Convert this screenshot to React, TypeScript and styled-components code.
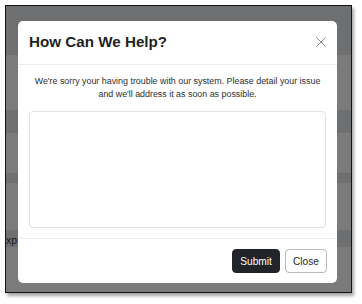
import React from "react";
import styled, { createGlobalStyle } from "styled-components";

const Global = createGlobalStyle`
  html, body { margin: 0; padding: 0; background: #ffffff; }
  body { font-family: "Liberation Sans", Arial, sans-serif; }
  * { box-sizing: border-box; }
`;

const Page = styled.div`
  width: 362px;
  height: 304px;
  padding: 5px;
  background: #ffffff;
`;

const Frame = styled.div`
  position: relative;
  width: 347px;
  height: 288px;
  border: 1px solid #141414;
  box-shadow: 2px 3px 3px rgba(0, 0, 0, 0.35);
  display: flex;
  flex-direction: column;
  overflow: hidden;
`;

const Band = styled.div<{ $h: number; $dark?: boolean }>`
  height: ${(p) => p.$h}px;
  flex: none;
  background: ${(p) => (p.$dark ? "#6e6f71" : "#7b7b7b")};
  display: flex;
  align-items: center;
  font-size: 10.5px;
  line-height: 12px;
  color: #1c1c1c;
`;

const Behind = styled.span`
  margin-top: 2px;
`;

const Modal = styled.div`
  position: absolute;
  left: 12px;
  top: 15px;
  width: 319px;
  height: 262px;
  background: #ffffff;
  border-radius: 5px;
  display: flex;
  flex-direction: column;
`;

const Header = styled.div`
  height: 44px;
  flex: none;
  display: flex;
  align-items: center;
  justify-content: space-between;
  padding: 0 10px 2px 11px;
  border-bottom: 1px solid #ececec;
`;

const Title = styled.h5`
  margin: 0;
  font-size: 15.2px;
  font-weight: 700;
  color: #1f1f1f;
`;

const CloseX = styled.button`
  border: 0;
  background: transparent;
  padding: 0;
  width: 12px;
  height: 12px;
  display: flex;
  align-items: center;
  justify-content: center;
  cursor: pointer;
`;

const Body = styled.div`
  flex: 1;
  display: flex;
  flex-direction: column;
  padding: 10px 11px 10px 11px;
  border-bottom: 1px solid #ececec;
`;

const Message = styled.p`
  margin: 0 0 10px 0;
  font-size: 8.9px;
  line-height: 13px;
  text-align: center;
  color: #2e2e2e;
  white-space: nowrap;
`;

const Area = styled.textarea`
  flex: 1;
  width: 100%;
  resize: none;
  border: 1px solid #dfe2e6;
  border-radius: 4px;
  font-family: inherit;
  outline: none;
`;

const Footer = styled.div`
  height: 44px;
  flex: none;
  display: flex;
  align-items: center;
  justify-content: flex-end;
  gap: 5px;
  padding: 0 10px 0 11px;
`;

const Btn = styled.button<{ $primary?: boolean }>`
  height: 24px;
  padding: 0 7px;
  font-family: "Liberation Sans", Arial, sans-serif;
  font-size: 10.2px;
  border-radius: 4px;
  cursor: pointer;
  border: 1px solid ${(p) => (p.$primary ? "#212529" : "#b9b9b9")};
  background: ${(p) => (p.$primary ? "#212529" : "#ffffff")};
  color: ${(p) => (p.$primary ? "#ffffff" : "#2a2a2a")};
`;

export default function App() {
  return (
    <>
      <Global />
      <Page>
        <Frame>
          <Band $h={49} $dark />
          <Band $h={55} />
          <Band $h={23} $dark />
          <Band $h={40} />
          <Band $h={10} $dark />
          <Band $h={47} />
          <Band $h={17} $dark>
            <Behind>xp</Behind>
          </Band>
          <Band $h={45} />
          <Modal>
            <Header>
              <Title>How Can We Help?</Title>
              <CloseX aria-label="Close">
                <svg width="10" height="10" viewBox="0 0 10 10">
                  <path d="M0.5 0.5 L9.5 9.5 M9.5 0.5 L0.5 9.5" stroke="#8a8a8a" strokeWidth="1" fill="none" />
                </svg>
              </CloseX>
            </Header>
            <Body>
              <Message>
                We're sorry your having trouble with our system. Please detail your issue
                <br />
                and we'll address it as soon as possible.
              </Message>
              <Area />
            </Body>
            <Footer>
              <Btn $primary>Submit</Btn>
              <Btn>Close</Btn>
            </Footer>
          </Modal>
        </Frame>
      </Page>
    </>
  );
}
